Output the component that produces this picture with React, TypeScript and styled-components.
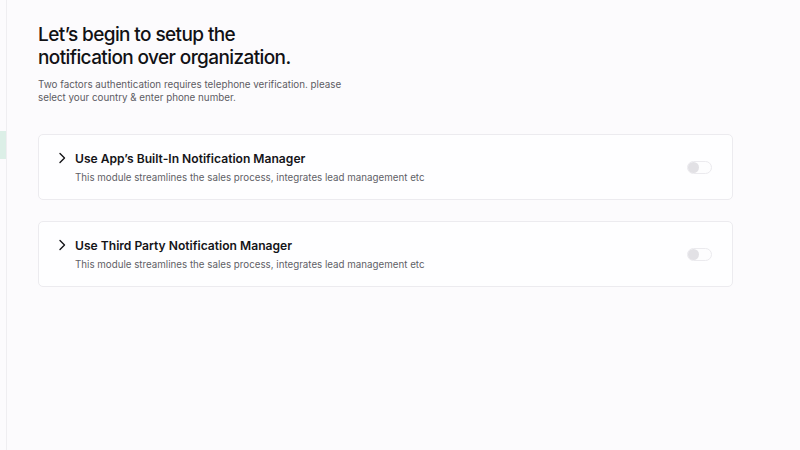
import React from "react";
import styled, { createGlobalStyle } from "styled-components";

const Global = createGlobalStyle`
  html, body { margin: 0; padding: 0; background: #fcfbfd; }
  body { font-family: Inter, "Noto Sans", Arial, sans-serif; -webkit-font-smoothing: antialiased; }
  * { box-sizing: border-box; }
`;

const Page = styled.div`
  display: flex;
  width: 800px;
  height: 450px;
  overflow: hidden;
  background: #fcfbfd;
`;

const Sidebar = styled.aside`
  width: 7px;
  flex: none;
  border-right: 1px solid #efeef1;
  padding-top: 131px;
`;

const SideActive = styled.div`
  height: 28px;
  background: #dcefe7;
`;

const Main = styled.main`
  flex: 1;
  padding: 23px 67px 0 31px;
`;

const Heading = styled.h1`
  margin: 0;
  font-size: 19px;
  line-height: 23px;
  font-weight: 500;
  color: #111114;
  letter-spacing: -0.6px;
`;

const Sub = styled.p`
  margin: 9px 0 0;
  font-size: 9.8px;
  line-height: 13px;
  color: #5c5c63;
  width: 320px;
`;

const List = styled.div`
  margin-top: 30px;
  display: flex;
  flex-direction: column;
  gap: 21px;
`;

const Card = styled.div`
  height: 66px;
  background: #fefeff;
  border: 1px solid #ecebef;
  border-radius: 5px;
  display: flex;
  align-items: center;
  padding: 0 20px 0 18px;
`;

const Chevron = styled.svg`
  width: 10px;
  height: 12px;
  flex: none;
  margin-top: -19px;
`;

const Texts = styled.div`
  flex: 1;
  margin-left: 8px;
  display: flex;
  flex-direction: column;
  gap: 5px;
`;

const Title = styled.div`
  font-size: 12.1px;
  line-height: 15px;
  font-weight: 600;
  color: #141418;
`;

const Desc = styled.div`
  font-size: 9.75px;
  line-height: 13px;
  color: #5e5e66;
`;

const Toggle = styled.div`
  width: 25px;
  height: 13px;
  border-radius: 7px;
  border: 1px solid #ebeaee;
  background: #fdfdfe;
  position: relative;
  flex: none;
  margin-top: 1px;
`;

const Knob = styled.div`
  position: absolute;
  left: 0px;
  top: 0px;
  width: 11px;
  height: 11px;
  border-radius: 50%;
  background: #e2e1e5;
`;

const items = [
  "Use App’s Built-In Notification Manager",
  "Use Third Party Notification Manager",
];

export default function App() {
  return (
    <>
      <Global />
      <Page>
        <Sidebar>
          <SideActive />
        </Sidebar>
        <Main>
          <Heading>
            Let’s begin to setup the
            <br />
            notification over organization.
          </Heading>
          <Sub>
            Two factors authentication requires telephone verification. please
            select your country &amp; enter phone number.
          </Sub>
          <List>
            {items.map((t) => (
              <Card key={t}>
                <Chevron viewBox="0 0 10 12">
                  <path d="M3 1.5 L7.5 6 L3 10.5" fill="none" stroke="#141418" strokeWidth="1.4" strokeLinecap="round" strokeLinejoin="round" />
                </Chevron>
                <Texts>
                  <Title>{t}</Title>
                  <Desc>This module streamlines the sales process, integrates lead management etc</Desc>
                </Texts>
                <Toggle>
                  <Knob />
                </Toggle>
              </Card>
            ))}
          </List>
        </Main>
      </Page>
    </>
  );
}
